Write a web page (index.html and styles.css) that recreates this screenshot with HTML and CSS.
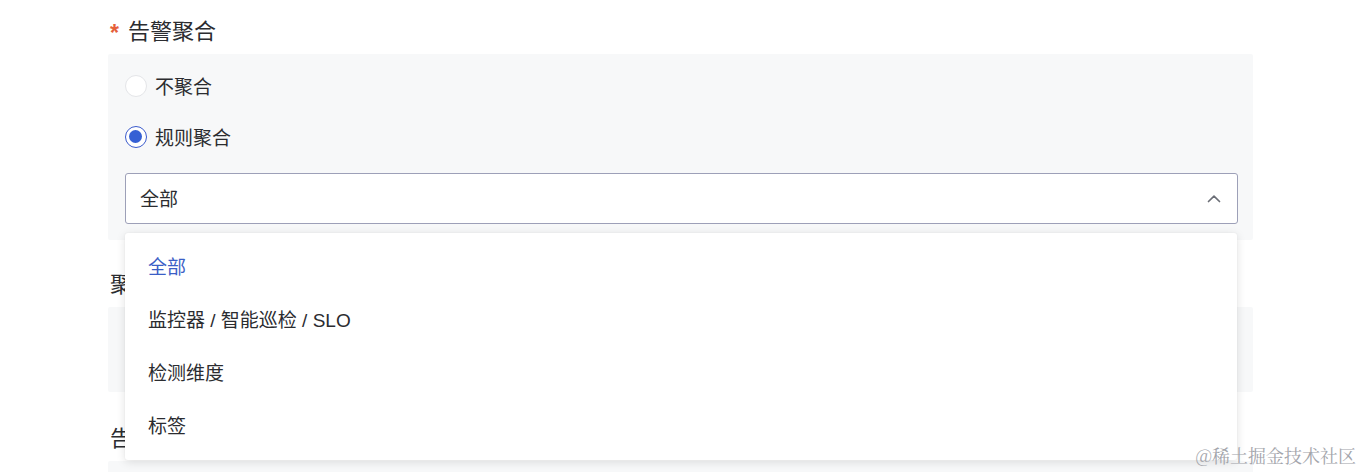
FILE: index.html
```html
<!DOCTYPE html>
<html lang="zh">
<head>
<meta charset="utf-8">
<link rel="stylesheet" href="styles.css">
</head>
<body>
<div class="form">
  <div class="form-item">
    <div class="label"><span class="req">*</span>告警聚合</div>
    <div class="panel panel-main">
      <label class="radio-row"><span class="radio"></span><span class="radio-text">不聚合</span></label>
      <label class="radio-row"><span class="radio checked"></span><span class="radio-text">规则聚合</span></label>
      <div class="select-wrap">
        <div class="select">
          <span class="select-value">全部</span>
          <svg class="chevron" width="16" height="16" viewBox="0 0 16 16"><path d="M2.5 10.5 L8 5.2 L13.5 10.5" fill="none" stroke="#6b6e76" stroke-width="1.7" stroke-linecap="round" stroke-linejoin="round"/></svg>
        </div>
        <ul class="dropdown">
          <li class="option active">全部</li>
          <li class="option">监控器 / 智能巡检 / SLO</li>
          <li class="option">检测维度</li>
          <li class="option">标签</li>
        </ul>
      </div>
    </div>
  </div>
  <div class="form-item">
    <div class="label label-sub">聚合方式</div>
    <div class="panel panel-sub"></div>
  </div>
  <div class="form-item">
    <div class="label label-sub">告警通知</div>
    <div class="panel panel-sub"></div>
  </div>
</div>
<div class="watermark">@稀土掘金技术社区</div>
</body>
</html>
```
FILE: styles.css
```css
* { box-sizing: border-box; }
html, body { margin: 0; padding: 0; background: #fff; overflow: hidden; }
body {
  width: 1362px;
  height: 472px;
  font-family: "Liberation Sans", "Noto Sans CJK SC", sans-serif;
  color: #2b2c30;
  position: relative;
}
.form {
  margin-left: 108px;
  width: 1145px;
}
.label {
  display: flex;
  align-items: center;
  height: 54px;
  padding: 10px 0 0 2px;
  font-size: 22px;
  line-height: 34px;
}
.req {
  color: #e5603a;
  font-size: 23px;
  font-weight: bold;
  margin-right: 9px;
  position: relative;
  top: 1px;
}
.label-sub {
  height: 67px;
  padding: 31px 0 0 2px;
  line-height: 28px;
  align-items: flex-start;
}
.panel {
  background: #f7f8f9;
  border-radius: 2px;
}
.panel-main {
  padding: 6px 15px 16px 17px;
}
.panel-sub {
  height: 85px;
  margin-bottom: 2px;
}
.radio-row {
  display: flex;
  align-items: center;
  height: 51px;
}
.radio {
  width: 22px;
  height: 22px;
  border-radius: 50%;
  background: #fff;
  border: 1px solid #e4e5e8;
  margin-right: 8px;
  position: relative;
}
.radio.checked {
  border: 1.5px solid #3b5bcc;
}
.radio.checked::after {
  content: "";
  position: absolute;
  left: 3px;
  top: 3px;
  width: 13px;
  height: 13px;
  border-radius: 50%;
  background: #3560d4;
}
.radio-text {
  font-size: 19px;
}
.select-wrap {
  position: relative;
  margin-top: 11px;
}
.select {
  height: 51px;
  border: 1px solid #9da0b8;
  border-radius: 3px;
  background: #fff;
  display: flex;
  align-items: center;
  justify-content: space-between;
  padding: 0 15px 0 14px;
  font-size: 19px;
}
.select-value { position: relative; top: -1px; }
.chevron { display: block; }
.dropdown {
  position: absolute;
  left: 0;
  top: 60px;
  width: 1112px;
  margin: 0;
  padding: 8px 0 7px;
  list-style: none;
  background: #fff;
  border-radius: 3px;
  box-shadow: 0 2px 10px rgba(0, 0, 0, 0.12), 0 0 2px rgba(0, 0, 0, 0.06);
  z-index: 5;
}
.option {
  height: 53px;
  line-height: 53px;
  padding-left: 23px;
  font-size: 19px;
  color: #2b2c30;
}
.option.active { color: #3b5ec6; }
.watermark {
  position: absolute;
  right: 6px;
  bottom: 4px;
  font-family: "Noto Serif CJK SC", "Noto Sans CJK SC", serif;
  font-size: 18px;
  color: #a3a5ab;
  z-index: 10;
}
```
